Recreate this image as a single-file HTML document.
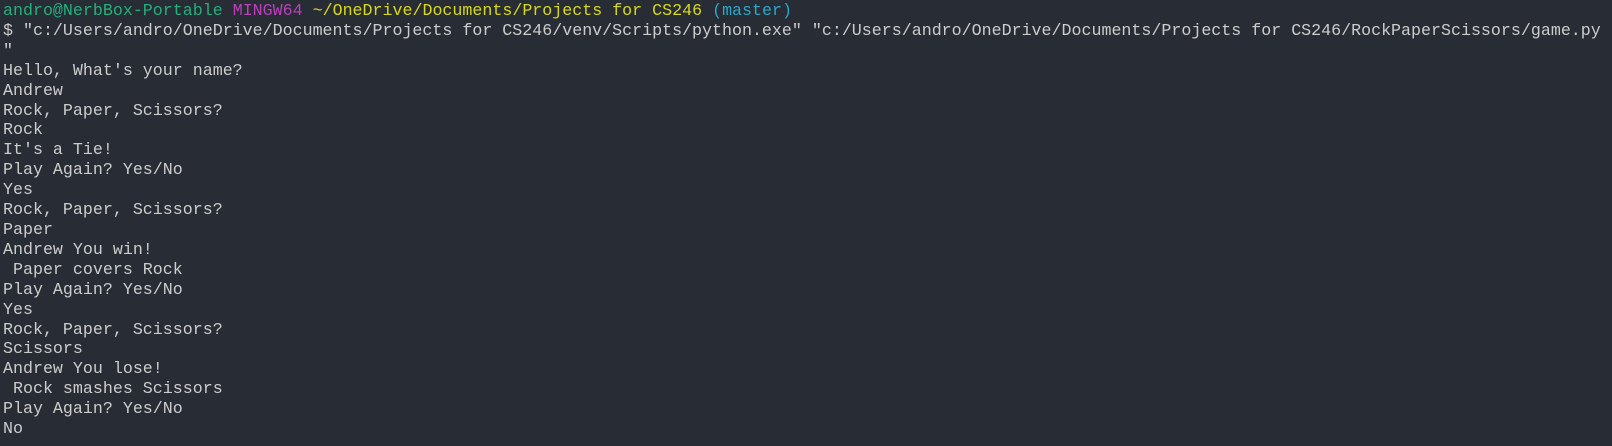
<!DOCTYPE html>
<html><head><meta charset="utf-8"><style>
html,body{margin:0;padding:0;background:#282c34;width:1612px;height:446px;overflow:hidden}
pre{margin:0;padding:1px 0 0 3px;position:absolute;top:0;left:0;font-family:"Liberation Mono","Courier New",monospace;font-size:16.65px;line-height:19.9px;color:#cccccc;white-space:pre}
.g{color:#23b07a}.m{color:#bc3fbc}.y{color:#d8d81a}.c{color:#29a8cb}
</style></head><body><pre><span class="g">andro@NerbBox-Portable</span> <span class="m">MINGW64</span> <span class="y">~/OneDrive/Documents/Projects for CS246</span> <span class="c">(master)</span>
$ "c:/Users/andro/OneDrive/Documents/Projects for CS246/venv/Scripts/python.exe" "c:/Users/andro/OneDrive/Documents/Projects for CS246/RockPaperScissors/game.py
"
Hello, What's your name?
Andrew
Rock, Paper, Scissors?
Rock
It's a Tie!
Play Again? Yes/No
Yes
Rock, Paper, Scissors?
Paper
Andrew You win!
 Paper covers Rock
Play Again? Yes/No
Yes
Rock, Paper, Scissors?
Scissors
Andrew You lose!
 Rock smashes Scissors
Play Again? Yes/No
No</pre></body></html>
